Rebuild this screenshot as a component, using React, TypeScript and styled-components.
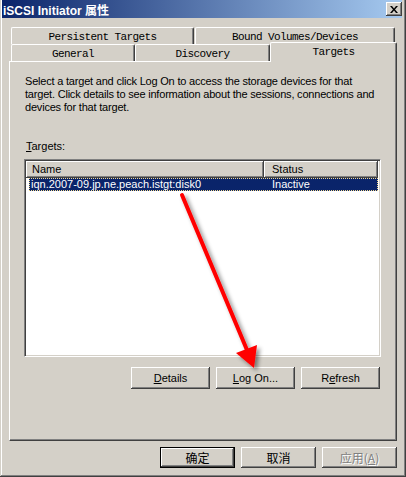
import React from 'react'
import styled, { createGlobalStyle, css } from 'styled-components'

const GlobalStyle = createGlobalStyle`
    html, body {
        margin: 0;
        padding: 0;
        background: #d4d0c8;
    }
    body {
        font-family: "Liberation Sans", Arial, "Noto Sans CJK SC", sans-serif;
        font-size: 11px;
        color: #000;
    }
`

const FACE = '#d4d0c8'

const raised = css`
    background: ${FACE};
    box-shadow:
        inset -1px -1px #404040,
        inset 1px 1px #ffffff,
        inset -2px -2px #808080,
        inset 2px 2px ${FACE};
`

function Mnemonic({ text, at }: { text: string, at: number }) {
    return (
        <>
            {text.slice(0, at)}
            <u>{text[at]}</u>
            {text.slice(at + 1)}
        </>
    )
}

function CloseGlyph() {
    return (
        <svg width="8" height="7" viewBox="0 0 8 7">
            <path d="M0 0h2l2 2.5L6 0h2L5 3.5 8 7H6L4 4.5 2 7H0l3-3.5z" fill="#000" />
        </svg>
    )
}

function Arrow() {
    return (
        <ArrowLayer width="406" height="477" viewBox="0 0 406 477">
            <defs>
                <filter id="shade" x="-20%" y="-20%" width="140%" height="140%">
                    <feDropShadow dx="3" dy="3" stdDeviation="2" floodColor="#000" floodOpacity="0.45" />
                </filter>
            </defs>
            <g filter="url(#shade)">
                <line x1="182" y1="195" x2="247" y2="350" stroke="#ff0000" strokeWidth="4" strokeLinecap="round" />
                <polygon points="236,353 257,345 254,368" fill="#ff0000" />
            </g>
        </ArrowLayer>
    )
}

export default function App() {
    return (
        <>
            <GlobalStyle />
            <Window>
                <TitleBar>
                    <Title>iSCSI Initiator 属性</Title>
                    <CloseButton><CloseGlyph /></CloseButton>
                </TitleBar>

                <Body>
                    <TabRow>
                        <Tab width={183}>Persistent Targets</Tab>
                        <Tab width={200} style={{ marginLeft: 1 }}>Bound Volumes/Devices</Tab>
                    </TabRow>
                    <TabRow>
                        <Tab width={124} low>General</Tab>
                        <Tab width={135} low>Discovery</Tab>
                        <ActiveTab width={127}>Targets</ActiveTab>
                    </TabRow>

                    <Panel>
                        <Intro>
                            Select a target and click Log On to access the storage devices for that<br />
                            target. Click details to see information about the sessions, connections and<br />
                            devices for that target.
                        </Intro>

                        <ListLabel><Mnemonic text="Targets:" at={0} /></ListLabel>
                        <ListView>
                            <Header>
                                <HeaderCell width={238}>Name</HeaderCell>
                                <HeaderCell width={114} pad={8}>Status</HeaderCell>
                            </Header>
                            <Row>
                                <Cell width={235}>iqn.2007-09.jp.ne.peach.istgt:disk0</Cell>
                                <Cell width={114} pad={8}>Inactive</Cell>
                            </Row>
                        </ListView>

                        <PanelButtons>
                            <Button width={79}><Mnemonic text="Details" at={0} /></Button>
                            <Button width={79}><Mnemonic text="Log On..." at={0} /></Button>
                            <Button width={79}><Mnemonic text="Refresh" at={1} /></Button>
                        </PanelButtons>
                    </Panel>

                    <Footer>
                        <Button width={75} cjk isDefault>确定</Button>
                        <Button width={75} cjk>取消</Button>
                        <Button width={75} cjk disabled>应用(<u>A</u>)</Button>
                    </Footer>
                </Body>

                <Arrow />
            </Window>
        </>
    )
}

const Window = styled.div`
    position: relative;
    width: 406px;
    height: 477px;
    box-sizing: border-box;
    padding: 0 2px 2px 2px;
    background: ${FACE};
    box-shadow:
        inset -1px -1px #404040,
        inset 1px 0 ${FACE},
        inset -2px -2px #808080,
        inset 2px 0 #ffffff;
    display: flex;
    flex-direction: column;
`

const TitleBar = styled.div`
    height: 18px;
    margin-right: 2px;
    display: flex;
    align-items: center;
    justify-content: space-between;
    padding: 0 0 0 1px;
    background: linear-gradient(to right, #0a246a, #a6caf0);
`

const Title = styled.div`
    color: #fff;
    font-weight: bold;
    font-size: 12px;
    font-family: "Liberation Sans", Arial, "Noto Sans CJK SC", sans-serif;
    white-space: nowrap;
`

const CloseButton = styled.div`
    ${raised};
    width: 16px;
    height: 14px;
    display: flex;
    align-items: center;
    justify-content: center;
`

const Body = styled.div`
    flex: 1;
    display: flex;
    flex-direction: column;
    padding: 9px 7px 0 7px;
`

const TabRow = styled.div`
    display: flex;
    height: 17px;
    padding-left: 2px;
`

const tabFace = css`
    box-sizing: border-box;
    background: ${FACE};
    border-top: 1px solid #fff;
    border-left: 1px solid #fff;
    border-right: 1px solid #404040;
    border-radius: 2px 2px 0 0;
    box-shadow: inset -1px 0 #808080;
    font-family: "Liberation Mono", "Courier New", monospace;
    font-size: 11px;
    letter-spacing: -0.6px;
    text-align: center;
    white-space: nowrap;
`

const Tab = styled.div<{ width: number, low?: boolean }>`
    ${tabFace};
    width: ${({ width }) => width}px;
    height: 17px;
    line-height: ${({ low }) => (low ? 18 : 19)}px;
`

const ActiveTab = styled.div<{ width: number }>`
    ${tabFace};
    position: relative;
    z-index: 1;
    width: ${({ width }) => width}px;
    height: 20px;
    margin-top: -2px;
    line-height: 18px;
`

const Panel = styled.div`
    height: 380px;
    box-sizing: border-box;
    display: flex;
    flex-direction: column;
    padding: 13px 16px 0 15px;
    border-top: 1px solid #fff;
    border-left: 1px solid #fff;
    border-right: 1px solid #404040;
    border-bottom: 1px solid #404040;
    box-shadow: inset -1px -1px #808080;
`

const Intro = styled.div`
    line-height: 13px;
    letter-spacing: -0.2px;
    white-space: nowrap;
`

const ListLabel = styled.div`
    margin-top: 26px;
    line-height: 13px;
    padding-left: 1px;
`

const ListView = styled.div`
    margin: 6px 0 0 -1px;
    width: 357px;
    height: 198px;
    box-sizing: border-box;
    background: #fff;
    border-top: 1px solid #808080;
    border-left: 1px solid #808080;
    border-right: 1px solid #fff;
    border-bottom: 1px solid #fff;
    box-shadow: inset 1px 1px #404040, inset -1px -1px ${FACE};
    padding: 1px;
    display: flex;
    flex-direction: column;
`

const Header = styled.div`
    display: flex;
    height: 17px;
`

const HeaderCell = styled.div<{ width: number, pad?: number }>`
    ${raised};
    width: ${({ width }) => width}px;
    box-sizing: border-box;
    padding-left: ${({ pad = 6 }) => pad}px;
    line-height: 16px;
    white-space: nowrap;
`

const Row = styled.div`
    display: flex;
    height: 13px;
    margin: 0 0 0 3px;
    width: 349px;
    background: #0a246a;
    color: #fff;
    outline: 1px dotted #f3d98e;
    outline-offset: -1px;
`

const Cell = styled.div<{ width: number, pad?: number }>`
    width: ${({ width }) => width}px;
    box-sizing: border-box;
    padding-left: ${({ pad = 2 }) => pad}px;
    line-height: 13px;
    white-space: nowrap;
    overflow: hidden;
`

const PanelButtons = styled.div`
    display: flex;
    justify-content: flex-end;
    gap: 6px;
    margin-top: 10px;
`

const Button = styled.button<{ width: number, cjk?: boolean, isDefault?: boolean }>`
    ${raised};
    width: ${({ width }) => width}px;
    height: ${({ cjk }) => (cjk ? 21 : 22)}px;
    border: none;
    padding: 0;
    margin: 0;
    color: #000;
    font-family: ${({ cjk }) => (cjk
        ? '"Noto Sans CJK SC", "Liberation Sans", sans-serif'
        : '"Liberation Sans", Arial, sans-serif')};
    font-size: ${({ cjk }) => (cjk ? 12 : 11)}px;
    line-height: 1;
    ${({ isDefault }) => isDefault && css`
        box-shadow:
            inset 0 0 0 1px #000,
            inset -2px -2px #404040,
            inset 2px 2px #ffffff,
            inset -3px -3px #808080;
    `}
    &:disabled {
        color: #808080;
        text-shadow: 1px 1px #fff;
    }
`

const Footer = styled.div`
    display: flex;
    justify-content: flex-end;
    gap: 6px;
    margin-top: 6px;
`

const ArrowLayer = styled.svg`
    position: absolute;
    left: 0;
    top: 0;
    pointer-events: none;
`
